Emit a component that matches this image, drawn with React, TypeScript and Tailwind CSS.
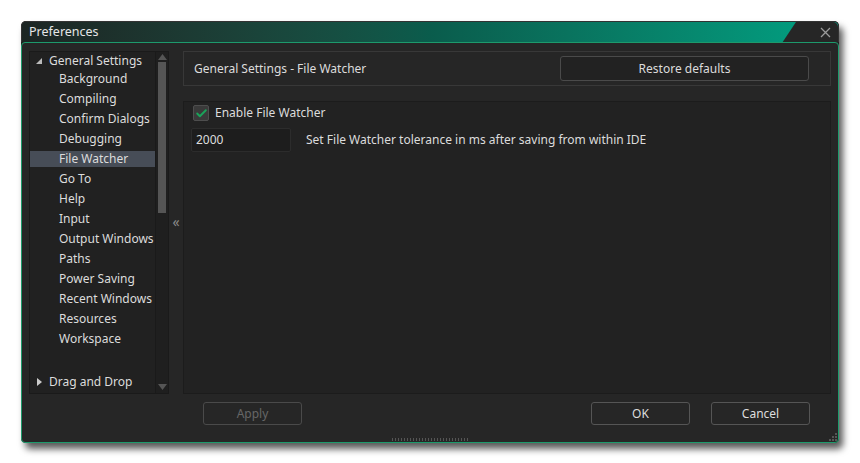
import { Check } from "lucide-react";

const items = [
  "Background",
  "Compiling",
  "Confirm Dialogs",
  "Debugging",
  "File Watcher",
  "Go To",
  "Help",
  "Input",
  "Output Windows",
  "Paths",
  "Power Saving",
  "Recent Windows",
  "Resources",
  "Workspace",
];

function Btn({ label, disabled }: { label: string; disabled?: boolean }) {
  return (
    <div
      className={`w-[99px] h-[23px] flex items-center justify-center rounded-[3px] border ${
        disabled ? "border-[#4a4a4a] text-[#666]" : "border-[#555] text-[#ddd]"
      } bg-[#262626]`}
    >
      {label}
    </div>
  );
}

export default function App() {
  return (
    <div
      className="w-[860px] h-[463px] bg-white pt-[21px] pl-[21px] text-[12px] text-[#dcdcdc] whitespace-nowrap"
      style={{ fontFamily: '"Noto Sans", "Open Sans", sans-serif' }}
    >
      <div className="w-[818px] h-[422px] flex flex-col rounded-[5px] bg-[#1e1e1e] shadow-[4px_6px_7px_rgba(0,0,0,0.65)]">
        {/* Title bar */}
        <div className="relative h-[21px] rounded-t-[5px] border border-b-0 border-[#333] bg-gradient-to-r from-[#1c2523] via-[#0a5c4c] to-[#00a283] flex items-center pl-[7px]">
          <span className="text-[#e6e6e6] text-[12.5px] leading-none">Preferences</span>
          <div className="absolute right-0 top-0 w-[56px] h-[21px] bg-[#262626] rounded-tr-[5px] [clip-path:polygon(14px_0,100%_0,100%_100%,0_100%)]" />
          <svg className="absolute right-[7px] top-[5px]" width="11" height="11" viewBox="0 0 11 11">
            <path d="M1 1 L10 10 M10 1 L1 10" stroke="#9a9a9a" strokeWidth="1.3" />
          </svg>
        </div>

        {/* Body */}
        <div className="flex-1 flex flex-col border border-[#1d9a6c] rounded-[4px] bg-[#262626] relative">
          <div className="flex px-[7px] pt-[8px]">
            {/* Tree */}
            <div className="w-[140px] h-[343px] flex bg-[#212121] border border-[#1a1a1a]">
              <div className="flex-1 flex flex-col -mt-px">
                <div className="h-5 flex items-center pl-[5px]">
                  <svg width="8" height="8" viewBox="0 0 8 8" className="mr-[6px]">
                    <path d="M7 1 L7 7 L1 7 Z" fill="#bbb" />
                  </svg>
                  <span className="leading-4">General Settings</span>
                </div>
                {items.map((it) => (
                  <div key={it} className="h-5">
                    <div
                      className={`h-4 pl-[29px] flex items-center ${
                        it === "File Watcher" ? "bg-[#474d57]" : ""
                      }`}
                    >
                      {it}
                    </div>
                  </div>
                ))}
                <div className="h-[21px]" />
                <div className="h-5 flex items-center pl-[6px]">
                  <svg width="7" height="10" viewBox="0 0 7 10" className="mr-[6px]">
                    <path d="M1 1 L6 5 L1 9 Z" fill="#ccc" />
                  </svg>
                  <span>Drag and Drop</span>
                </div>
              </div>
              {/* Scrollbar */}
              <div className="w-[13px] flex flex-col items-center bg-[#1f1f1f] border-l border-[#1a1a1a]">
                <svg width="9" height="6" viewBox="0 0 9 6" className="mt-[2px]">
                  <path d="M0 6 L4.5 0 L9 6 Z" fill="#555" />
                </svg>
                <div className="w-[8px] h-[151px] mt-[2px] bg-[#555]" />
                <div className="flex-1" />
                <svg width="9" height="6" viewBox="0 0 9 6" className="mb-[3px]">
                  <path d="M0 0 L9 0 L4.5 6 Z" fill="#555" />
                </svg>
              </div>
            </div>

            {/* Collapse strip */}
            <div className="w-[14px] h-[343px] flex items-center justify-center text-[#8a8a8a] text-[14px] leading-none pb-[2px]">
              «
            </div>

            {/* Right */}
            <div className="w-[648px] flex flex-col">
              <div className="h-[35px] border border-[#383838] flex items-center pl-[10px] pr-[21px]">
                <span className="flex-1">General Settings - File Watcher</span>
                <div className="w-[249px] h-[25px] rounded-[3px] border border-[#4a4a4a] bg-[#222] flex items-center justify-center">
                  Restore defaults
                </div>
              </div>
              <div className="h-[293px] mt-[15px] bg-[#222] border border-[#1c1c1c] pl-[9px] pt-[3px]">
                <div className="flex items-center h-[16px]">
                  <div className="w-[16px] h-[16px] rounded-[2px] bg-[#3a3a3a] border border-[#4e4e4e] flex items-center justify-center">
                    <Check size={13} strokeWidth={3.5} className="text-[#1aa35a]" />
                  </div>
                  <span className="ml-[6px]">Enable File Watcher</span>
                </div>
                <div className="flex items-center mt-[7px]">
                  <div className="w-[100px] h-[24px] -ml-[2px] bg-[#1d1d1d] border border-[#2c2c2c] rounded-[2px] flex items-center pl-[4px]">
                    2000
                  </div>
                  <span className="ml-[15px]">Set File Watcher tolerance in ms after saving from within IDE</span>
                </div>
              </div>
            </div>
          </div>

          {/* Buttons */}
          <div className="flex items-center mt-[8px] pl-[181px]">
            <Btn label="Apply" disabled />
            <div className="w-[289px]" />
            <Btn label="OK" />
            <div className="w-[21px]" />
            <Btn label="Cancel" />
          </div>

          {/* Grips */}
          <div className="absolute bottom-[1px] left-[370px] w-[76px] h-[3px] bg-[repeating-linear-gradient(90deg,#555_0_1px,transparent_1px_3px)]" />
          <svg className="absolute right-[1px] bottom-[1px]" width="8" height="8" viewBox="0 0 8 8">
            <rect x="6" y="0" width="2" height="2" fill="#555" />
            <rect x="3" y="3" width="2" height="2" fill="#555" />
            <rect x="6" y="3" width="2" height="2" fill="#555" />
            <rect x="0" y="6" width="2" height="2" fill="#555" />
            <rect x="3" y="6" width="2" height="2" fill="#555" />
            <rect x="6" y="6" width="2" height="2" fill="#555" />
          </svg>
        </div>
      </div>
    </div>
  );
}
